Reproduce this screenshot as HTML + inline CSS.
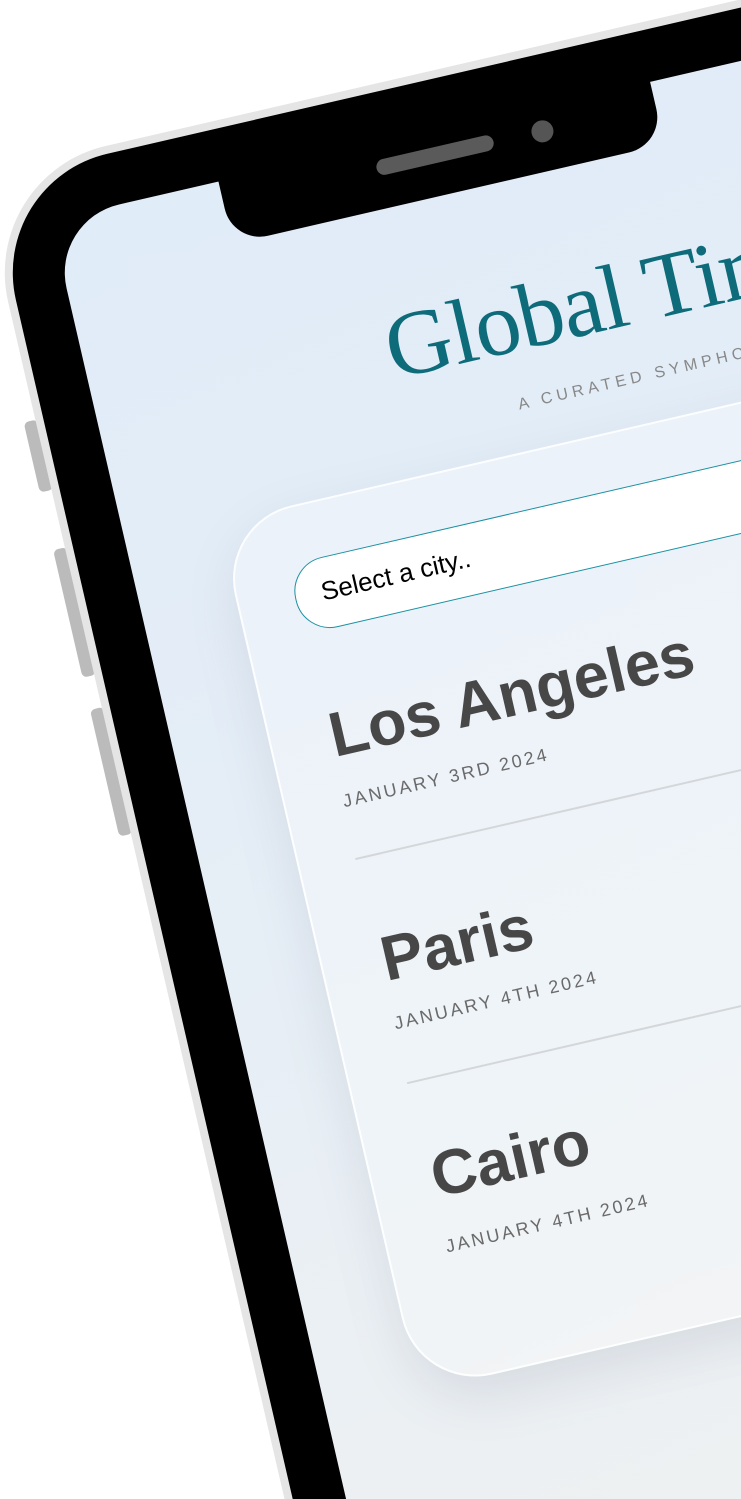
<!DOCTYPE html>
<html><head><meta charset="utf-8"><style>
html,body{margin:0;padding:0;background:#fff;width:741px;height:1499px;overflow:hidden;position:relative}
#r{position:absolute;left:0;top:0;width:1px;height:1px;transform-origin:0 0;transform:rotate(-13deg)}
#r div{position:absolute}
.btn{background:#bbb;border-radius:5px;left:-72px;width:14px}
.city{font-family:"Liberation Sans",sans-serif;font-weight:bold;font-size:63px;line-height:1;color:#474747;letter-spacing:0;white-space:nowrap;left:156px}
.date{font-family:"Liberation Sans",sans-serif;font-size:18px;line-height:1;color:#6a6a6a;letter-spacing:2.6px;white-space:nowrap;left:154px}
.sep{left:153px;width:900px;height:1.5px;background:#d4d7da}
</style></head><body>
<div id="r">
  <div class="btn" style="top:417px;height:72px"></div>
  <div class="btn" style="top:548px;height:131px"></div>
  <div class="btn" style="top:712px;height:130px"></div>
  <div style="left:-60px;top:166px;width:1400px;height:2000px;background:#e5e5e5;border-radius:130px"></div>
  <div style="left:-52px;top:174px;width:1400px;height:2000px;background:#000;border-radius:122px"></div>
  <div style="left:0;top:226px;width:1300px;height:1900px;border-radius:70px;background:linear-gradient(170deg,#e0ecf8 0%,#e6eef6 35%,#eef1f2 70%,#f4f2e8 100%);overflow:hidden">
  </div>
  <div style="left:172px;top:215px;width:443px;height:75px;background:#000;border-radius:0 0 36px 36px"></div>
  <div style="left:329px;top:241px;width:120px;height:16px;background:#5a5a5a;border-radius:8px"></div>
  <div style="left:488px;top:239px;width:22px;height:22px;background:#555;border-radius:50%"></div>

  <div style="left:298px;top:381px;font-family:'Liberation Serif',serif;font-size:92px;line-height:1;color:#0e6b7a;letter-spacing:-1px;white-space:nowrap">Global Times</div>
  <div style="left:414px;top:504px;font-family:'Liberation Sans',sans-serif;font-size:16px;line-height:1;color:#888;letter-spacing:4.5px;white-space:nowrap">A CURATED SYMPHONY</div>

  <div style="left:95px;top:558px;width:900px;height:888px;border-radius:75px;background:rgba(255,255,255,0.3);border:2px solid rgba(255,255,255,0.85);box-shadow:0 20px 50px rgba(120,130,150,0.18)"></div>
  <div style="left:153px;top:615px;width:900px;height:70px;border-radius:35px;background:#fff;border:1.5px solid #1a91a3"></div>
  <div style="left:180px;top:636px;font-family:'Liberation Sans',sans-serif;font-size:26px;line-height:1;color:#000;white-space:nowrap">Select a city..</div>

  <div class="city" style="top:761px">Los Angeles</div>
  <div class="date" style="top:849px">JANUARY 3RD 2024</div>
  <div class="sep" style="top:916px"></div>
  <div class="city" style="top:991px">Paris</div>
  <div class="date" style="top:1077px">JANUARY 4TH 2024</div>
  <div class="sep" style="top:1146px"></div>
  <div class="city" style="top:1213px">Cairo</div>
  <div class="date" style="top:1306px">JANUARY 4TH 2024</div>
</div>
</body></html>
